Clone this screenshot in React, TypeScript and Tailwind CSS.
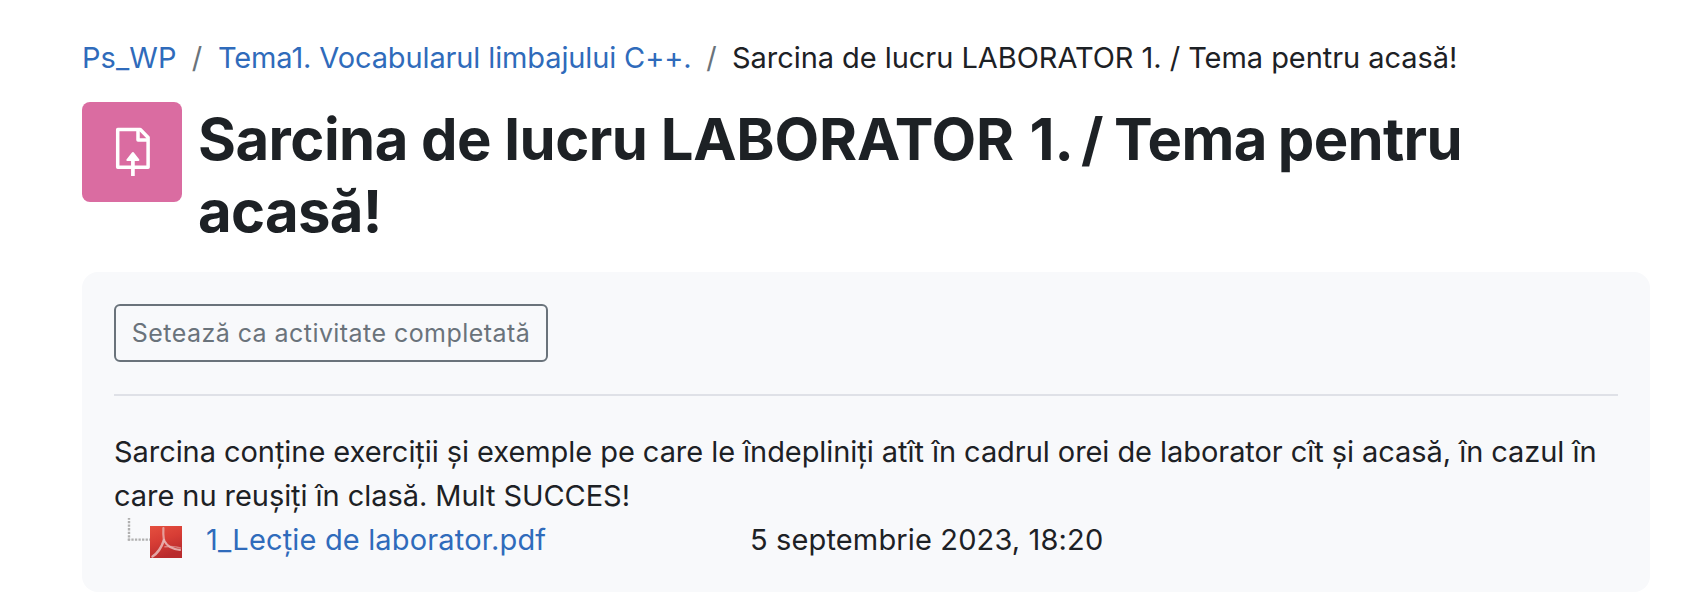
import React from "react";

function UploadIcon() {
  return (
    <svg viewBox="0 0 48 52" width="48" height="52" fill="none" stroke="white">
      <path d="M9.7 3.5H32.3L40.1 11.5V41.3H9.7Z" strokeWidth="3.5" strokeLinejoin="round" />
      <path d="M30 4V14H40" strokeWidth="3.5" strokeLinejoin="round" />
      <path d="M24.9 32V50" strokeWidth="3.7" />
      <path d="M24.9 27.2L30.2 33.9H19.6Z" fill="white" strokeWidth="2.4" strokeLinejoin="round" />
    </svg>
  );
}

function PdfIcon() {
  return (
    <svg viewBox="0 0 32 32" width="32" height="32">
      <defs>
        <linearGradient id="pdf" x1="0" y1="0" x2="0.35" y2="1">
          <stop offset="0" stopColor="#e5503f" />
          <stop offset="0.5" stopColor="#d73d35" />
          <stop offset="1" stopColor="#b92b2d" />
        </linearGradient>
      </defs>
      <rect width="32" height="32" fill="url(#pdf)" />
      <g fill="none" stroke="#e8b4b2" strokeLinecap="round">
        <path d="M13.4 2C13 7 13.4 11 14 15" strokeWidth="2.2" opacity="0.8" />
        <path d="M14 14C12 20 8 27 2.5 30.5" strokeWidth="2.4" opacity="0.9" />
        <path d="M14 14.5C17 20 23 23.5 30 24" strokeWidth="2.2" opacity="0.9" />
        <path d="M15 20.8C20 20.3 26 20.4 30.5 22" strokeWidth="1.6" opacity="0.6" />
      </g>
    </svg>
  );
}

export default function App() {
  return (
    <main className="h-[616px] w-[1692px] bg-white pl-[82px] pt-[36px] font-['Inter',sans-serif] text-[#1d2125]">
      <nav className="flex h-[44px] items-center whitespace-nowrap text-[29px] leading-[44px] tracking-[-0.05px]">
        <a className="w-[94px] tracking-[0.1px] text-[#2f6bbb]">Ps_WP</a>
        <span className="w-[42px] text-center text-[#6a737b]">/</span>
        <a className="w-[473px] tracking-[-0.13px] text-[#2f6bbb]">Tema1. Vocabularul limbajului C++.</a>
        <span className="w-[41px] text-center text-[#6a737b]">/</span>
        <span>Sarcina de lucru LABORATOR 1. / Tema pentru acasă!</span>
      </nav>
      <header className="mt-[22px] flex h-[170px] gap-4">
        <div className="flex size-[100px] items-center justify-center rounded-lg bg-[#da6ca1]">
          <UploadIcon />
        </div>
        <h1 className="whitespace-nowrap pt-px text-[58px] font-bold leading-[72px] tracking-[-0.52px]">
          Sarcina de lucru <span className="tracking-[-0.2px]">LABORATOR</span>
          <span className="tracking-[-0.1px] [word-spacing:2px]"> 1.</span>
          <span className="[word-spacing:-6px]"> /</span>
          <span className="tracking-[-0.66px] [word-spacing:-2px]"> Tema pentru</span>
          <br />
          <span className="tracking-[-0.7px]">acasă!</span>
        </h1>
      </header>
      <section className="h-[320px] w-[1568px] rounded-2xl bg-[#f8f9fb] px-8 pt-8">
        <button className="block h-[58px] w-[434px] whitespace-nowrap rounded-md border-2 border-[#6a737b] pt-[2px] text-[25px] tracking-[0.44px] text-[#6a737b]">
          Setează ca activitate completată
        </button>
        <hr className="mt-8 border-t-2 border-[#dfe1e7]" />
        <p className="mt-[34px] whitespace-nowrap text-[29px] leading-[44px] tracking-[-0.06px]">
          Sarcina conține exerciții și exemple pe care le îndepliniți atît în cadrul orei de laborator cît și acasă, în cazul în
          <br />
          care nu reușiți în clasă. Mult SUCCES!
        </p>
        <div className="flex h-[44px] whitespace-nowrap text-[29px] leading-[44px]">
          <svg className="ml-[12px]" viewBox="0 0 24 44" width="24" height="44" fill="none" stroke="#b0b0b0" strokeWidth="2.4" strokeDasharray="2.3 1.26">
            <path d="M3 -0.6V22.5" />
            <path d="M1.8 21.6H24" />
          </svg>
          <span className="pt-[8px]">
            <PdfIcon />
          </span>
          <a className="ml-6 w-[544px] tracking-[0.16px] text-[#2f6bbb]">1_Lecție de laborator.pdf</a>
          <span className="tracking-[0.14px]">5 septembrie 2023, 18:20</span>
        </div>
      </section>
    </main>
  );
}
